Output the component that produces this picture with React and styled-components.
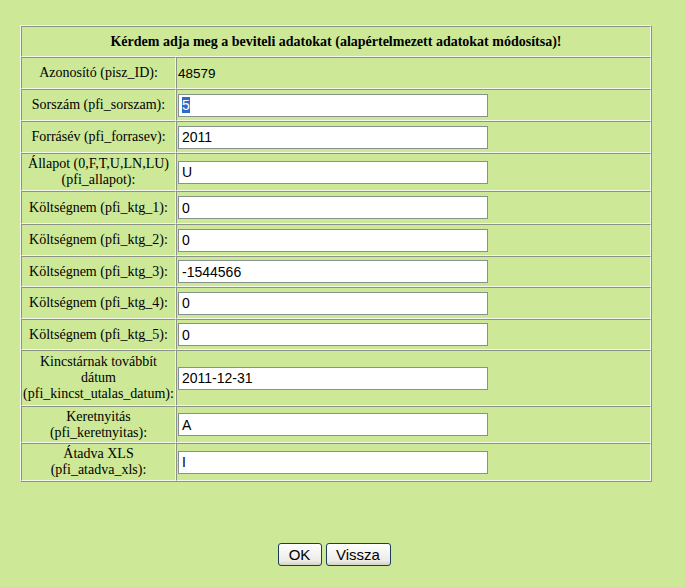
import React from 'react';
import styled, { createGlobalStyle } from 'styled-components';

const GlobalStyle = createGlobalStyle`
  html, body {
    margin: 0;
    padding: 0;
    background: #cde897;
  }
`;

const Page = styled.div`
  padding: 25px 0 0 20px;
  width: 665px;
  min-height: 587px;
  box-sizing: border-box;
`;

const Table = styled.table`
  width: 632px;
  table-layout: fixed;
  border-collapse: separate;
  border-spacing: 0;
  border: 1px solid;
  border-color: #f4f8ec #8a928a #8a928a #f4f8ec;
`;

const Cell = styled.td`
  border: 1px solid;
  border-color: #8a928a #f4f8ec #f4f8ec #8a928a;
  padding: 0 1px;
  vertical-align: middle;
  height: ${p => p.$h}px;
  box-sizing: border-box;
`;

const HeaderCell = styled(Cell)`
  text-align: center;
  font-family: "Liberation Serif", "Times New Roman", serif;
  font-weight: bold;
  font-size: 14px;
  color: #000;
`;

const Label = styled(Cell)`
  padding: 0;
  text-align: center;
  font-family: "Liberation Serif", "Times New Roman", serif;
  font-size: 14px;
  line-height: 16px;
  color: #000;
`;

const Value = styled(Cell)`
  padding: 0 0 0 1px;
  font-family: "Liberation Sans", Arial, sans-serif;
  font-size: 13.5px;
  color: #000;
`;

const Field = styled.input`
  display: block;
  width: 310px;
  height: 23px;
  box-sizing: border-box;
  margin: 0;
  padding: 1px 3px;
  border: 1px solid #86938c;
  background: #fff;
  font-family: "Liberation Sans", Arial, sans-serif;
  font-size: 14px;
  color: #000;
  outline: none;

  &::selection {
    background: #3169c6;
    color: #fff;
  }
`;

const Buttons = styled.div`
  display: flex;
  justify-content: center;
  gap: 4px;
  width: 632px;
  margin-top: 61px;
  padding-right: 4px;
  box-sizing: border-box;
`;

const Button = styled.button`
  width: ${p => p.$w}px;
  height: 23px;
  padding: 0;
  border: 1px solid #1c3c5c;
  border-radius: 3px;
  background: linear-gradient(#ffffff, #ecebe6 80%, #d6d0c5);
  font-family: "Liberation Sans", Arial, sans-serif;
  font-size: 15px;
  color: #000;
`;

const rows = [
  { label: 'Sorszám (pfi_sorszam):', value: '5', h: 32, selected: true },
  { label: 'Forrásév (pfi_forrasev):', value: '2011', h: 32 },
  { label: ['Állapot (0,F,T,U,LN,LU)', '(pfi_allapot):'], value: 'U', h: 38 },
  { label: 'Költségnem (pfi_ktg_1):', value: '0', h: 33 },
  { label: 'Költségnem (pfi_ktg_2):', value: '0', h: 32 },
  { label: 'Költségnem (pfi_ktg_3):', value: '-1544566', h: 31 },
  { label: 'Költségnem (pfi_ktg_4):', value: '0', h: 32 },
  { label: 'Költségnem (pfi_ktg_5):', value: '0', h: 31 },
  { label: ['Kincstárnak továbbít', 'dátum', '(pfi_kincst_utalas_datum):'], value: '2011-12-31', h: 56 },
  { label: ['Keretnyitás', '(pfi_keretnyitas):'], value: 'A', h: 37 },
  { label: ['Átadva XLS', '(pfi_atadva_xls):'], value: 'I', h: 38 },
];

const renderLabel = label =>
  Array.isArray(label)
    ? label.map((line, i) => (
        <React.Fragment key={i}>
          {i > 0 && <br />}
          {line}
        </React.Fragment>
      ))
    : label;

const App = () => {
  const firstRef = React.useRef(null);

  React.useEffect(() => {
    if (firstRef.current) firstRef.current.select();
  }, []);

  return (
    <Page>
      <GlobalStyle />
      <Table>
        <colgroup>
          <col style={{ width: 155 }} />
          <col />
        </colgroup>
        <tbody>
          <tr>
            <HeaderCell colSpan={2} $h={31}>
              Kérdem adja meg a beviteli adatokat (alapértelmezett adatokat módosítsa)!
            </HeaderCell>
          </tr>
          <tr>
            <Label $h={32}>Azonosító (pisz_ID):</Label>
            <Value $h={32}>48579</Value>
          </tr>
          {rows.map((row, i) => (
            <tr key={i}>
              <Label $h={row.h}>{renderLabel(row.label)}</Label>
              <Value $h={row.h}>
                <Field
                  ref={row.selected ? firstRef : undefined}
                  defaultValue={row.value}
                />
              </Value>
            </tr>
          ))}
        </tbody>
      </Table>
      <Buttons>
        <Button $w={44}>OK</Button>
        <Button $w={65}>Vissza</Button>
      </Buttons>
    </Page>
  );
};

export default App;
